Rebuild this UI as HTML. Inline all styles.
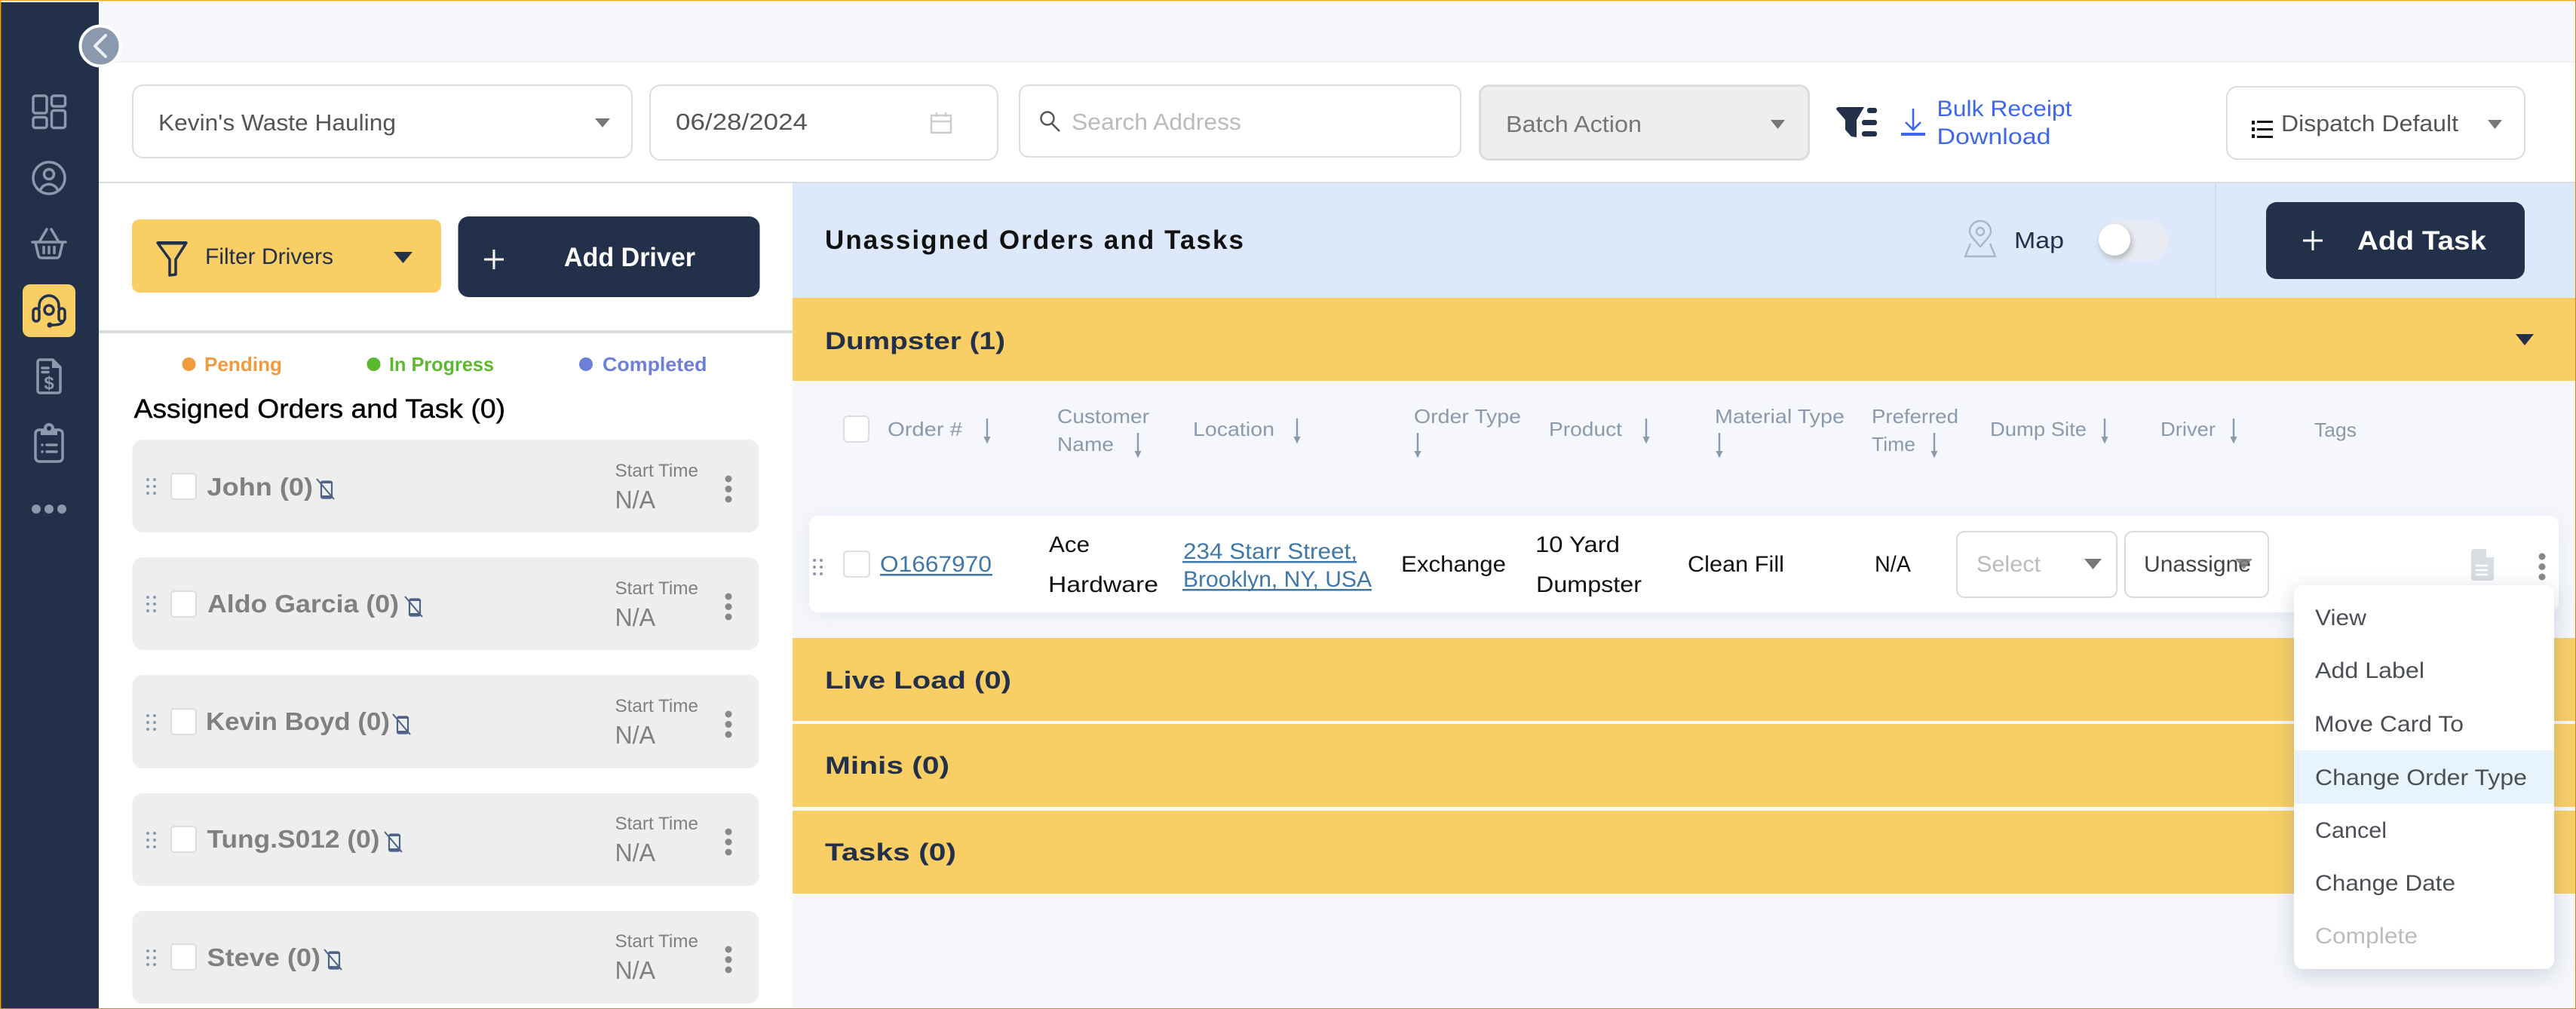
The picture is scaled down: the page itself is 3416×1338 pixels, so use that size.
<!DOCTYPE html>
<html lang="en"><head><meta charset="utf-8"><title>Dispatch</title>
<style>
html,body{margin:0;padding:0;background:#fff}
svg{display:block}
text{font-family:"Liberation Sans",sans-serif;white-space:pre}
.sm{font-size:31px;fill:#555}
.hd{font-size:26px;fill:#8a99ad}
.rw{font-size:30px;fill:#111}
.lk{font-size:30px;fill:#3f78a8}
.bar{font-size:32px;font-weight:700;fill:#22304a}
.nm{font-size:33px;font-weight:700;fill:#808080}
.st{font-size:24px;fill:#808080}
.na{font-size:33px;fill:#808080}
.mn{font-size:30px;fill:#4a4f55}
.lg{font-size:26px;font-weight:700}
.wb{font-size:35px;font-weight:700;fill:#fff}
.ic{fill:none;stroke:#8a99ad;stroke-width:3.5;stroke-linecap:round;stroke-linejoin:round}
.dk{fill:none;stroke:#22304a;stroke-width:3.5;stroke-linecap:round;stroke-linejoin:round}
</style></head><body>
<svg xmlns="http://www.w3.org/2000/svg" width="3416" height="1338" viewBox="0 0 3416 1338">
<defs>
<g id="ph"><path d="M6 5.5a2 2 0 0 1 2-2h10a2 2 0 0 1 2 2v18a2 2 0 0 1-2 2H8a2 2 0 0 1-2-2z" fill="none" stroke="#4c6286" stroke-width="2.2"/><rect x="6" y="3" width="14" height="3" fill="#4c6286"/><rect x="6" y="22" width="14" height="4" fill="#4c6286"/><path d="M0 0L23 27" stroke="#4c6286" stroke-width="2"/></g>
<g id="dr" fill="#8a99ad"><circle cx="2" cy="2" r="2"/><circle cx="11" cy="2" r="2"/><circle cx="2" cy="11" r="2"/><circle cx="11" cy="11" r="2"/><circle cx="2" cy="20" r="2"/><circle cx="11" cy="20" r="2"/></g>
<g id="vd" fill="#888"><circle cx="0" cy="0" r="4.5"/><circle cx="0" cy="13.5" r="4.5"/><circle cx="0" cy="27" r="4.5"/></g>
<g id="ar"><path d="M0 0V28" fill="none" stroke="#8a99ad" stroke-width="2.4"/><path d="M-4.500 24L0 33.500 4.500 24z" fill="#8a99ad"/></g>
</defs>

<rect width="3416" height="1338" fill="#f5f7fc"/>
<rect x="131" y="83" width="3285" height="158" fill="#fff"/>
<rect x="131" y="81" width="3285" height="2" fill="#f0f1f5"/>
<rect x="131" y="241" width="3285" height="2" fill="#d8dde2"/>
<rect x="131" y="243" width="920" height="1095" fill="#fff"/>
<rect x="131" y="438" width="920" height="4" fill="#d8dde2"/>
<rect x="1051" y="243" width="2365" height="152" fill="#dde8fb"/>
<rect x="2937.5" y="243" width="1.5" height="152" fill="#cdd6e3"/>
<rect x="1051" y="395" width="2365" height="110" fill="#f8ce65"/>
<rect x="1051" y="846" width="2365" height="110" fill="#f8ce65"/>
<rect x="1051" y="960" width="2365" height="110" fill="#f8ce65"/>
<rect x="1051" y="1075" width="2365" height="110" fill="#f8ce65"/>

<!-- sidebar -->
<rect x="0" y="3" width="131" height="1335" fill="#22304a"/>
<g class="ic">
<rect x="44" y="127" width="18" height="23" rx="3"/><rect x="68.500" y="127" width="18" height="14" rx="3"/><rect x="44" y="155.500" width="18" height="14" rx="3"/><rect x="68.500" y="146.500" width="18" height="23" rx="3"/>
<circle cx="65" cy="236" r="21"/><circle cx="65" cy="231" r="6.500"/><path d="M54 251c5-9 17-9 22 0"/>
<path d="M62 304L52 321M68 304L78 321M43 321H87M47 322l4 17a4 4 0 0 0 4 3h20a4 4 0 0 0 4-3l4-17M58 327.500v8M65 327.500v8M72 327.500v8"/>
<path d="M53 477h17l10 10v31a3 3 0 0 1-3 3H53a3 3 0 0 1-3-3V480a3 3 0 0 1 3-3z"/><path d="M56 488h8M56 493.500h8"/>
<rect x="47" y="570" width="36" height="42" rx="5"/><path d="M56 590v0M62 590h13M56 599v0M62 599h13"/>
</g>
<path d="M69 477l12 11H69z" fill="#8a99ad"/>
<text x="65" y="516" text-anchor="middle" style="font-size:24px;font-weight:700;fill:#8a99ad">$</text>
<path d="M54 569h6a5.500 5.500 0 0 1 10 0h6v8H54z" fill="#8a99ad"/><circle cx="65" cy="568" r="7" fill="#8a99ad"/><circle cx="65" cy="568" r="3" fill="#22304a"/>
<g fill="#8a99ad"><circle cx="48" cy="675" r="6"/><circle cx="65" cy="675" r="6"/><circle cx="82" cy="675" r="6"/></g>
<rect x="30" y="377" width="70" height="70" rx="10" fill="#f8ce65"/>
<g class="dk"><circle cx="65" cy="411" r="6"/><path d="M52 408v-3a13 13 0 0 1 26 0v3"/><rect x="44" y="409" width="8" height="17" rx="4"/><rect x="78" y="409" width="8" height="17" rx="4"/><path d="M84 426c-1 4-8 5-17 5"/></g>
<circle cx="66" cy="431" r="3.500" fill="#22304a"/>
<circle cx="133" cy="61" r="26.500" fill="#8a99ad" stroke="#fff" stroke-width="4"/>
<path d="M140 47L126 61 140 75" fill="none" stroke="#eceff3" stroke-width="4" stroke-linecap="round" stroke-linejoin="round"/>

<!-- header -->
<rect x="176" y="113" width="662" height="96" rx="14" fill="#fff" stroke="#d8dde2" stroke-width="2"/>
<text class="sm" x="210" y="173" textLength="315" lengthAdjust="spacingAndGlyphs">Kevin's Waste Hauling</text>
<path d="M789 157h20l-10 12z" fill="#777"/>
<rect x="862" y="113" width="461" height="99" rx="14" fill="#fff" stroke="#d8dde2" stroke-width="2"/>
<text class="sm" x="896" y="172" textLength="175" lengthAdjust="spacingAndGlyphs">06/28/2024</text>
<g fill="none" stroke="#ccc" stroke-width="2.500"><rect x="1235" y="153" width="26" height="23"/><path d="M1235 161h26M1242 149v6M1254 149v6"/></g>
<rect x="1352" y="113" width="585" height="95" rx="12" fill="#fff" stroke="#dcdcdc" stroke-width="2"/>
<circle cx="1389" cy="157" r="8.500" fill="none" stroke="#555" stroke-width="2.400"/><path d="M1395 164l10 10" stroke="#555" stroke-width="2.600"/>
<text class="sm" x="1421" y="172" textLength="225" lengthAdjust="spacingAndGlyphs" style="fill:#bbb">Search Address</text>
<rect x="1962.500" y="113.500" width="436" height="98" rx="12" fill="#eee" stroke="#d8dde2" stroke-width="3"/>
<text class="sm" x="1997" y="175" textLength="180" lengthAdjust="spacingAndGlyphs" style="fill:#777">Batch Action</text>
<path d="M2348 159h19l-9.500 12z" fill="#777"/>
<path d="M2435 145a3 3 0 0 1 3-3h34l-10 17v23l-7-1-8-9v-13z" fill="#22304a"/>
<g fill="#22304a"><rect x="2476" y="143" width="13" height="7" rx="3"/><rect x="2469" y="159" width="20" height="7" rx="3"/><rect x="2469" y="174" width="20" height="7" rx="3"/></g>
<path d="M2537 144v28M2527 162l10 10 10-10" fill="none" stroke="#3f67e8" stroke-width="2.600"/><rect x="2521" y="176" width="32" height="4" fill="#3f67e8"/>
<text x="2568.500" y="154" textLength="179" lengthAdjust="spacingAndGlyphs" style="font-size:30px;fill:#3f67ea">Bulk Receipt</text>
<text x="2568.500" y="191" textLength="151" lengthAdjust="spacingAndGlyphs" style="font-size:30px;fill:#3f67ea">Download</text>
<rect x="2953" y="115" width="395" height="96" rx="14" fill="#fff" stroke="#d8dde2" stroke-width="2"/>
<g fill="#111"><rect x="2986" y="160" width="4" height="5"/><rect x="2986" y="169" width="4" height="5"/><rect x="2986" y="178" width="4" height="5"/><rect x="2993" y="160" width="21" height="3"/><rect x="2993" y="170" width="21" height="3"/><rect x="2993" y="180" width="21" height="3"/></g>
<text class="sm" x="3025" y="174" textLength="235" lengthAdjust="spacingAndGlyphs">Dispatch Default</text>
<path d="M3299 159h19l-9.500 12z" fill="#777"/>

<!-- heading row -->
<text x="1094" y="330" textLength="555" lengthAdjust="spacing" style="font-size:35px;font-weight:700;fill:#111">Unassigned Orders and Tasks</text>
<g fill="none" stroke="#aab6c6" stroke-width="2.400"><path d="M2626 327c-8-9-14-15-14-20a14 14 0 0 1 28 0c0 5-6 11-14 20z"/><circle cx="2626" cy="307" r="5"/><path d="M2613 323l-7 17h40l-7-17"/></g>
<text x="2671" y="329" textLength="66" lengthAdjust="spacingAndGlyphs" style="font-size:31px;fill:#22304a">Map</text>
<rect x="2784" y="293" width="91" height="53" rx="26" fill="#e8ecf2"/>
<circle cx="2804" cy="318" r="21" fill="#fff" style="filter:drop-shadow(2px 4px 4px rgba(0,0,0,.25))"/>
<rect x="3005" y="268" width="343" height="102" rx="14" fill="#22304a"/>
<path d="M3067 306v26M3054 319h26" stroke="#fff" stroke-width="3"/>
<text class="wb" x="3126" y="331" textLength="171" lengthAdjust="spacingAndGlyphs">Add Task</text>

<!-- bars -->
<text class="bar" x="1094" y="463" textLength="239" lengthAdjust="spacingAndGlyphs">Dumpster (1)</text>
<path d="M3336 443h24l-12 15z" fill="#22304a"/>
<text class="bar" x="1094" y="913" textLength="247" lengthAdjust="spacingAndGlyphs">Live Load (0)</text>
<text class="bar" x="1094" y="1026" textLength="165" lengthAdjust="spacingAndGlyphs">Minis (0)</text>
<text class="bar" x="1094" y="1141" textLength="174" lengthAdjust="spacingAndGlyphs">Tasks (0)</text>

<!-- table header -->
<rect x="1119" y="552" width="33" height="34" rx="5" fill="#fff" stroke="#ddd" stroke-width="2"/>
<text class="hd" x="1177" y="578" textLength="99" lengthAdjust="spacingAndGlyphs">Order #</text><use href="#ar" x="1309" y="555"/>
<text class="hd" x="1402" y="561" textLength="122" lengthAdjust="spacingAndGlyphs">Customer</text>
<text class="hd" x="1402" y="598" textLength="75" lengthAdjust="spacingAndGlyphs">Name</text><use href="#ar" x="1509" y="574"/>
<text class="hd" x="1582" y="578" textLength="108" lengthAdjust="spacingAndGlyphs">Location</text><use href="#ar" x="1720" y="555"/>
<text class="hd" x="1875" y="561" textLength="142" lengthAdjust="spacingAndGlyphs">Order Type</text><use href="#ar" x="1880" y="574"/>
<text class="hd" x="2054" y="578" textLength="97" lengthAdjust="spacingAndGlyphs">Product</text><use href="#ar" x="2183" y="555"/>
<text class="hd" x="2274" y="561" textLength="172" lengthAdjust="spacingAndGlyphs">Material Type</text><use href="#ar" x="2280" y="574"/>
<text class="hd" x="2482" y="561" textLength="115" lengthAdjust="spacingAndGlyphs">Preferred</text>
<text class="hd" x="2482" y="598" textLength="58" lengthAdjust="spacingAndGlyphs">Time</text><use href="#ar" x="2565" y="574"/>
<text class="hd" x="2639" y="578" textLength="128" lengthAdjust="spacingAndGlyphs">Dump Site</text><use href="#ar" x="2791" y="555"/>
<text class="hd" x="2865" y="578" textLength="73" lengthAdjust="spacingAndGlyphs">Driver</text><use href="#ar" x="2962" y="555"/>
<text class="hd" x="3069" y="579" textLength="56" lengthAdjust="spacingAndGlyphs">Tags</text>

<!-- row -->
<rect x="1073" y="684" width="2320" height="128" rx="12" fill="#fff" style="filter:drop-shadow(0 2px 12px rgba(120,130,160,.12))"/>
<use href="#dr" x="1078" y="741"/>
<rect x="1119" y="731" width="34" height="34" rx="5" fill="#fff" stroke="#ddd" stroke-width="2"/>
<text class="lk" x="1167" y="758" textLength="148" lengthAdjust="spacingAndGlyphs">O1667970</text><rect x="1167" y="761" width="149" height="2.500" fill="#3f78a8"/>
<text class="rw" x="1391" y="732" textLength="54" lengthAdjust="spacingAndGlyphs">Ace</text>
<text class="rw" x="1390" y="785" textLength="146" lengthAdjust="spacingAndGlyphs">Hardware</text>
<text class="lk" x="1569" y="741" textLength="231" lengthAdjust="spacingAndGlyphs">234 Starr Street,</text><rect x="1568" y="744" width="231" height="2.500" fill="#3f78a8"/>
<text class="lk" x="1569" y="778" textLength="250" lengthAdjust="spacingAndGlyphs">Brooklyn, NY, USA</text><rect x="1568" y="781" width="251" height="2.500" fill="#3f78a8"/>
<text class="rw" x="1858" y="758" textLength="139" lengthAdjust="spacingAndGlyphs">Exchange</text>
<text class="rw" x="2036" y="732" textLength="112" lengthAdjust="spacingAndGlyphs">10 Yard</text>
<text class="rw" x="2037" y="785" textLength="140" lengthAdjust="spacingAndGlyphs">Dumpster</text>
<text class="rw" x="2238" y="758" textLength="128" lengthAdjust="spacingAndGlyphs">Clean Fill</text>
<text class="rw" x="2486" y="758" textLength="48" lengthAdjust="spacingAndGlyphs">N/A</text>
<rect x="2595" y="705" width="212" height="87" rx="10" fill="#fff" stroke="#d9d9d9" stroke-width="2"/>
<text class="rw" x="2621" y="758" textLength="85" lengthAdjust="spacingAndGlyphs" style="fill:#bbb">Select</text>
<path d="M2764 741h23l-11.500 14z" fill="#777"/>
<rect x="2818" y="705" width="190" height="87" rx="10" fill="#fff" stroke="#d9d9d9" stroke-width="2"/>
<text class="rw" x="2843" y="758" textLength="142" lengthAdjust="spacingAndGlyphs" style="fill:#444">Unassigne</text>
<path d="M2964 741h23l-11.500 14z" fill="#777" fill-opacity=".85"/>
<path d="M3280 728h17l10 11v28a3 3 0 0 1-3 3h-24a3 3 0 0 1-3-3v-36a3 3 0 0 1 3-3z" fill="#d8dde2"/><path d="M3297 728v11h10z" fill="#fff"/><path d="M3283 750h16M3283 756h16M3283 762h16" stroke="#fff" stroke-width="2.500"/>
<use href="#vd" x="3371" y="738"/>

<!-- left panel -->
<rect x="175" y="291" width="410" height="97" rx="10" fill="#f8ce65"/>
<path d="M209 322h38l-14 22v20l-8 1v-21z" fill="none" stroke="#22304a" stroke-width="3.500" stroke-linejoin="round"/><rect x="209" y="320" width="38" height="4.500" fill="#22304a"/>
<text x="272" y="350" textLength="170" lengthAdjust="spacingAndGlyphs" style="font-size:30px;fill:#22304a">Filter Drivers</text>
<path d="M522 334h25l-12.500 15z" fill="#22304a"/>
<rect x="607.500" y="287" width="400" height="107" rx="14" fill="#22304a"/>
<path d="M655 331v26M642 344h26" stroke="#fff" stroke-width="3"/>
<text class="wb" x="748" y="353" textLength="174" lengthAdjust="spacingAndGlyphs">Add Driver</text>

<circle cx="250.500" cy="483" r="9" fill="#f19a3e"/><text class="lg" x="271" y="492" textLength="103" lengthAdjust="spacingAndGlyphs" style="fill:#f19a3e">Pending</text>
<circle cx="495.500" cy="483" r="9" fill="#5cb82f"/><text class="lg" x="516" y="492" textLength="139" lengthAdjust="spacingAndGlyphs" style="fill:#5cb82f">In Progress</text>
<circle cx="777" cy="483" r="9" fill="#6c7fd9"/><text class="lg" x="799" y="492" textLength="138.500" lengthAdjust="spacingAndGlyphs" style="fill:#6c7fd9">Completed</text>
<text x="177.500" y="554" textLength="492.500" lengthAdjust="spacingAndGlyphs" style="font-size:35px;fill:#000;stroke:#000;stroke-width:.4">Assigned Orders and Task (0)</text>

<!-- card 1 -->
<rect x="175.500" y="583" width="831" height="123" rx="14" fill="#eee"/>
<use href="#dr" x="194" y="634"/><rect x="227" y="628" width="33" height="34" rx="4" fill="#fff" stroke="#ddd" stroke-width="2"/>
<text class="nm" x="274.500" y="657" textLength="140.500" lengthAdjust="spacingAndGlyphs">John (0)</text><use href="#ph" x="420" y="635"/>
<text class="st" x="815.500" y="632" textLength="110.500" lengthAdjust="spacingAndGlyphs">Start Time</text>
<text class="na" x="815.500" y="674" textLength="53.500" lengthAdjust="spacingAndGlyphs">N/A</text><use href="#vd" x="966" y="635"/>
<!-- card 2 -->
<rect x="175.500" y="739" width="831" height="123" rx="14" fill="#eee"/>
<use href="#dr" x="194" y="790"/><rect x="227" y="784" width="33" height="34" rx="4" fill="#fff" stroke="#ddd" stroke-width="2"/>
<text class="nm" x="275" y="812" textLength="254" lengthAdjust="spacingAndGlyphs">Aldo Garcia (0)</text><use href="#ph" x="537" y="791"/>
<text class="st" x="815.500" y="788" textLength="110.500" lengthAdjust="spacingAndGlyphs">Start Time</text>
<text class="na" x="815.500" y="830" textLength="53.500" lengthAdjust="spacingAndGlyphs">N/A</text><use href="#vd" x="966" y="791"/>
<!-- card 3 -->
<rect x="175.500" y="895" width="831" height="124" rx="14" fill="#eee"/>
<use href="#dr" x="194" y="947"/><rect x="227" y="940" width="33" height="34" rx="4" fill="#fff" stroke="#ddd" stroke-width="2"/>
<text class="nm" x="273" y="968" textLength="244" lengthAdjust="spacingAndGlyphs">Kevin Boyd (0)</text><use href="#ph" x="521" y="947"/>
<text class="st" x="815.500" y="944" textLength="110.500" lengthAdjust="spacingAndGlyphs">Start Time</text>
<text class="na" x="815.500" y="986" textLength="53.500" lengthAdjust="spacingAndGlyphs">N/A</text><use href="#vd" x="966" y="947"/>
<!-- card 4 -->
<rect x="175.500" y="1052" width="831" height="123" rx="14" fill="#eee"/>
<use href="#dr" x="194" y="1103"/><rect x="227" y="1096" width="33" height="34" rx="4" fill="#fff" stroke="#ddd" stroke-width="2"/>
<text class="nm" x="274.500" y="1124" textLength="229" lengthAdjust="spacingAndGlyphs">Tung.S012 (0)</text><use href="#ph" x="510" y="1103"/>
<text class="st" x="815.500" y="1100" textLength="110.500" lengthAdjust="spacingAndGlyphs">Start Time</text>
<text class="na" x="815.500" y="1142" textLength="53.500" lengthAdjust="spacingAndGlyphs">N/A</text><use href="#vd" x="966" y="1103"/>
<!-- card 5 -->
<rect x="175.500" y="1208" width="831" height="123" rx="14" fill="#eee"/>
<use href="#dr" x="194" y="1259"/><rect x="227" y="1252" width="33" height="34" rx="4" fill="#fff" stroke="#ddd" stroke-width="2"/>
<text class="nm" x="274.500" y="1281" textLength="150.500" lengthAdjust="spacingAndGlyphs">Steve (0)</text><use href="#ph" x="430" y="1259"/>
<text class="st" x="815.500" y="1256" textLength="110.500" lengthAdjust="spacingAndGlyphs">Start Time</text>
<text class="na" x="815.500" y="1298" textLength="53.500" lengthAdjust="spacingAndGlyphs">N/A</text><use href="#vd" x="966" y="1259"/>

<!-- menu -->
<rect x="3042" y="776" width="345" height="509" rx="12" fill="#fff" style="filter:drop-shadow(0 6px 14px rgba(60,70,100,.22))"/>
<rect x="3042" y="995" width="345" height="71" fill="#e8f4fd"/>
<text class="mn" x="3070" y="829" textLength="68" lengthAdjust="spacingAndGlyphs">View</text>
<text class="mn" x="3070" y="899" textLength="145" lengthAdjust="spacingAndGlyphs">Add Label</text>
<text class="mn" x="3069" y="970" textLength="198" lengthAdjust="spacingAndGlyphs">Move Card To</text>
<text class="mn" x="3070" y="1041" textLength="281" lengthAdjust="spacingAndGlyphs">Change Order Type</text>
<text class="mn" x="3070" y="1111" textLength="95" lengthAdjust="spacingAndGlyphs">Cancel</text>
<text class="mn" x="3070" y="1181" textLength="186" lengthAdjust="spacingAndGlyphs">Change Date</text>
<text class="mn" x="3070" y="1251" textLength="136" lengthAdjust="spacingAndGlyphs" style="fill:#bbb">Complete</text>

<!-- frame -->
<rect x="0" y="0" width="3416" height="1.200" fill="#f5a623"/>
<rect x="0" y="0" width="1.400" height="1338" fill="#f5a000"/>
<rect x="3415" y="0" width="1" height="1338" fill="#c98a1e"/>
<rect x="0" y="1337" width="3416" height="1" fill="#c98a1e"/>
</svg>
</body></html>
